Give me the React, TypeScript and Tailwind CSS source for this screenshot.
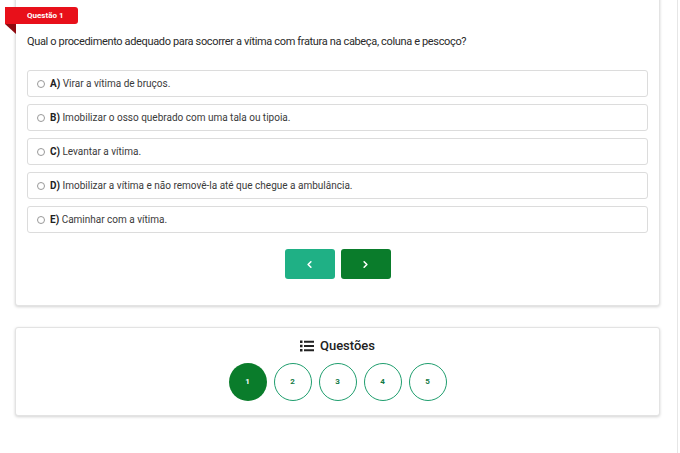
import { ChevronLeft, ChevronRight } from 'lucide-react'

const options = [
  { letter: 'A)', text: 'Virar a vítima de bruços.' },
  { letter: 'B)', text: 'Imobilizar o osso quebrado com uma tala ou tipoia.' },
  { letter: 'C)', text: 'Levantar a vítima.' },
  { letter: 'D)', text: 'Imobilizar a vítima e não removê-la até que chegue a ambulância.' },
  { letter: 'E)', text: 'Caminhar com a vítima.' },
]

function ListIcon() {
  return (
    <svg width="14" height="12" viewBox="0 0 14 12" fill="#222">
      <rect x="0" y="0.5" width="2.5" height="2.5" />
      <rect x="0" y="4.75" width="2.5" height="2.5" />
      <rect x="0" y="9" width="2.5" height="2.5" />
      <rect x="4" y="0.75" width="10" height="2" />
      <rect x="4" y="5" width="10" height="2" />
      <rect x="4" y="9.25" width="10" height="2" />
    </svg>
  )
}

export default function App() {
  return (
    <div className="relative w-[680px] h-[453px] overflow-hidden bg-white font-['Roboto',sans-serif] text-[#333]">
      {/* right edge line */}
      <div className="absolute right-[2px] top-0 h-full w-px bg-[#e6e6e6]" />

      <div className="pl-[15px] pr-[20px]">
        {/* Question card */}
        <div className="relative -mt-[10px] rounded-[3px] border border-[#e3e3e3] bg-white px-[11px] pt-[44px] pb-[26px] shadow-[0_1px_3px_rgba(0,0,0,0.18)]">
          {/* badge */}
          <div className="absolute left-[-11px] top-[16px]">
            <div className="flex h-[17px] w-[73px] items-center rounded-r-[3px] bg-[#e8101a] pl-[22px] text-[8px] font-bold text-white">
              Questão 1
            </div>
            <div className="h-0 w-0 border-t-[10px] border-l-[11px] border-t-[#8f0a10] border-l-transparent" />
          </div>

          <p className="text-[11px] leading-[14px] tracking-[-0.35px] text-[#2a2a2a]">
            Qual o procedimento adequado para socorrer a vítima com fratura na cabeça, coluna e pescoço?
          </p>

          <div className="mt-[21px] flex flex-col gap-[7px]">
            {options.map((o) => (
              <div
                key={o.letter}
                className="flex h-[27px] items-center gap-[5px] rounded-[3px] border border-[#dcdcdc] pl-[9px] text-[10px] text-[#3a3a3a]"
              >
                <span className="h-[8px] w-[8px] rounded-full border border-[#999]" />
                <span>
                  <b className="text-[#222]">{o.letter}</b> {o.text}
                </span>
              </div>
            ))}
          </div>

          <div className="mt-[16px] flex justify-center gap-[6px]">
            <button className="flex h-[30px] w-[50px] items-center justify-center rounded-[3px] bg-[#1fb085] text-white">
              <ChevronLeft className="h-[11px] w-[11px]" strokeWidth={3.5} />
            </button>
            <button className="flex h-[30px] w-[50px] items-center justify-center rounded-[3px] bg-[#0a7c2b] text-white">
              <ChevronRight className="h-[11px] w-[11px]" strokeWidth={3.5} />
            </button>
          </div>
        </div>

        {/* Questions card */}
        <div className="mt-[21px] flex h-[89px] flex-col items-center rounded-[3px] border border-[#e3e3e3] bg-white pt-[8px] shadow-[0_1px_3px_rgba(0,0,0,0.18)]">
          <div className="flex items-center gap-[6px] text-[13px] font-medium text-[#222]">
            <ListIcon />
            Questões
          </div>
          <div className="mt-[7px] flex gap-[7px]">
            {[1, 2, 3, 4, 5].map((n) => (
              <div
                key={n}
                className={
                  n === 1
                    ? 'flex h-[38px] w-[38px] items-center justify-center rounded-full bg-[#0a7c2b] text-[8px] font-bold text-white'
                    : 'flex h-[38px] w-[38px] items-center justify-center rounded-full border-[1.5px] border-[#1f9e6e] text-[8px] font-bold text-[#137a45]'
                }
              >
                {n}
              </div>
            ))}
          </div>
        </div>
      </div>
    </div>
  )
}
